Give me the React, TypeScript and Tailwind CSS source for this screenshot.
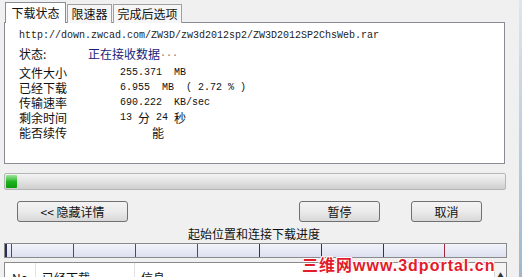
import React from "react";

const cjk = '"Noto Sans CJK SC", "Microsoft YaHei", sans-serif';

export default function App() {
  const mono = "font-['Liberation_Mono',monospace] text-[10px]";
  const segs = [
    { w: "w-[62px]", c: "border-[#a02a3c]" },
    { w: "w-[62px]", c: "border-[#a02a3c]" },
    { w: "w-[62px]", c: "border-[#a02a3c]" },
    { w: "w-[62px]", c: "border-[#a02a3c]" },
    { w: "w-[62px]", c: "border-[#5c1f4a]" },
    { w: "w-[62px]", c: "border-[#5c1f4a]" },
    { w: "w-[61px]", c: "border-[#5c1f4a]" },
  ];
  return (
    <div
      className="relative w-[522px] h-[277px] overflow-hidden bg-[#f0f0f0] text-[12px] text-[#111]"
      style={{ fontFamily: cjk }}
    >
      {/* tabs */}
      <div className="flex items-end pl-[5px] pt-[2px] h-[23px]">
        <div className="relative z-10 h-[21px] w-[61px] border border-b-0 border-[#898c95] bg-white flex items-center justify-center leading-none">
          下载状态
        </div>
        <div className="ml-[1px] h-[19px] w-[45px] border border-b-0 border-[#a0a0a0] bg-[#f6f6f6] flex items-center justify-center leading-none">
          限速器
        </div>
        <div className="ml-[1px] h-[19px] w-[69px] border border-b-0 border-[#a0a0a0] bg-[#f6f6f6] flex items-center justify-center leading-none">
          完成后选项
        </div>
      </div>

      {/* panel */}
      <div className="ml-[4px] -mt-px w-[501px] h-[142px] border border-[#898c95] bg-white pl-[14px] pt-[5px]">
        <div className={`h-[15px] leading-[15px] ${mono} text-[#222]`}>
          http://down.zwcad.com/ZW3D/zw3d2012sp2/ZW3D2012SP2ChsWeb.rar
        </div>
        <div className="mt-[3px] h-[15px] leading-[15px] flex items-center">
          <span className="w-[69px] leading-[15px]">状态:</span>
          <span className="text-[#1c1c7a] leading-[15px]">正在接收数据</span>
          <span className={`${mono} text-[#777] leading-[15px]`}>...</span>
        </div>
        <div className="mt-[4px]">
          <div className="h-[15px] flex items-center">
            <span className="w-[101px] leading-[15px]">文件大小</span>
            <span className={`${mono} whitespace-pre leading-[15px]`}>255.371  MB</span>
          </div>
          <div className="h-[15px] flex items-center">
            <span className="w-[101px] leading-[15px]">已经下载</span>
            <span className={`${mono} whitespace-pre leading-[15px]`}>6.955  MB  ( 2.72 % )</span>
          </div>
          <div className="h-[15px] flex items-center">
            <span className="w-[101px] leading-[15px]">传输速率</span>
            <span className={`${mono} whitespace-pre leading-[15px]`}>690.222  KB/sec</span>
          </div>
          <div className="h-[15px] flex items-center">
            <span className="w-[101px] leading-[15px]">剩余时间</span>
            <span className={`${mono} whitespace-pre leading-[15px]`}>13 </span>
            <span className="leading-[15px]">分</span>
            <span className={`${mono} whitespace-pre leading-[15px]`}> 24 </span>
            <span className="leading-[15px]">秒</span>
          </div>
          <div className="h-[15px] flex items-center">
            <span className="w-[101px] leading-[15px]">能否续传</span>
            <span className="pl-[32px] leading-[15px]">能</span>
          </div>
        </div>
      </div>

      {/* progress */}
      <div className="ml-[4px] mt-[9px] w-[502px] h-[17px] rounded-[2px] border border-[#b5b5b5] bg-gradient-to-b from-[#f4f4f4] via-[#e2e2e2] to-[#cfcfcf] p-[1px] flex">
        <div className="w-[11px] h-full rounded-[1px] bg-gradient-to-b from-[#9be79b] via-[#1fb51f] to-[#0d9a0d]" />
      </div>

      {/* buttons */}
      <div className="mt-[11px] h-[21px] flex">
        <button className="ml-[17px] w-[111px] h-[21px] rounded-[3px] border border-[#707070] bg-gradient-to-b from-[#f3f3f3] via-[#ebebeb] to-[#d8d8d8] leading-none" style={{ fontFamily: cjk }}>
          {"<< 隐藏详情"}
        </button>
        <button className="ml-[171px] w-[81px] h-[21px] rounded-[3px] border border-[#707070] bg-gradient-to-b from-[#f3f3f3] via-[#ebebeb] to-[#d8d8d8] leading-none" style={{ fontFamily: cjk }}>
          暂停
        </button>
        <button className="ml-[31px] w-[71px] h-[21px] rounded-[3px] border border-[#707070] bg-gradient-to-b from-[#f3f3f3] via-[#ebebeb] to-[#d8d8d8] leading-none" style={{ fontFamily: cjk }}>
          取消
        </button>
      </div>

      {/* title */}
      <div className="ml-[4px] w-[500px] mt-[4px] h-[15px] leading-[15px] text-center">
        起始位置和连接下载进度
      </div>

      {/* segment bar */}
      <div className="ml-[4px] mt-[2px] w-[503px] h-[15px] border border-[#8a8a8a] bg-gradient-to-b from-[#f2f3fa] to-[#dde0f0] flex">
        <div className="w-[2px] h-full bg-[#2a2d55]" />
        <div className="w-[4px] h-full" />
        {segs.map((s, i) => (
          <div key={i} className={`${s.w} h-full border-l ${s.c}`} />
        ))}
        <div className="flex-1 h-full border-l border-[#a02a3c]" />
      </div>

      {/* list */}
      <div className="ml-[4px] mt-[4px] w-[503px] h-[30px] border border-[#8a8a8a] bg-white flex">
        <div className="w-[31px] h-full border-r border-[#e2e2e2] pl-[7px] pt-[7px] leading-[15px]">No</div>
        <div className="w-[99px] h-full border-r border-[#e2e2e2] pl-[6px] pt-[7px] leading-[15px]">已经下载</div>
        <div className="flex-1 h-full pl-[6px] pt-[7px] leading-[15px]">信息</div>
        <div className="w-[12px] h-full border-l border-[#d8d8d8] bg-[#f4f4f4] flex justify-center pt-[7px] text-[6px] text-[#333]">▲</div>
      </div>

      {/* watermark */}
      <div
        className="absolute left-[302px] top-[257px] font-bold text-[16px] leading-[17px] text-[#e21b2a] tracking-[1px] whitespace-nowrap [text-shadow:-1px_-1px_0_#fff,1px_-1px_0_#fff,-1px_1px_0_#fff,1px_1px_0_#fff,0_0_2px_#e66]"
        style={{ fontFamily: '"Liberation Sans", "Noto Sans CJK SC", sans-serif' }}
      >
        三维网www.3dportal.cn
      </div>

      {/* window frame */}
      <div className="absolute right-0 top-0 w-[3px] h-full bg-gradient-to-b from-[#dbe6f1] to-[#9fb7cd]" />
    </div>
  );
}
